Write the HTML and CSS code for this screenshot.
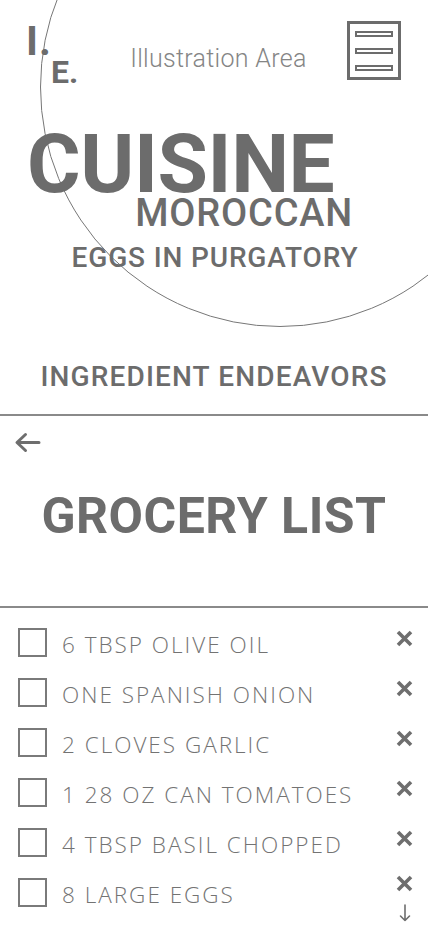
FILE: index.html
```html
<!DOCTYPE html>
<html lang="en">
<head>
<meta charset="utf-8">
<title>Cuisine – Grocery List</title>
<link rel="stylesheet" href="styles.css">
</head>
<body>
<div class="page">
  <header class="hero">
    <div class="circle"></div>
    <div class="topbar">
      <div class="logo"><span class="logo-i">I.</span><span class="logo-e">E.</span></div>
      <div class="illus">Illustration Area</div>
      <div class="menu"><span class="bar"></span><span class="bar"></span><span class="bar"></span></div>
    </div>
    <div class="titles">
      <h1 class="cuisine">CUISINE</h1>
      <div class="moroccan">MOROCCAN</div>
      <div class="dish">EGGS IN PURGATORY</div>
    </div>
  </header>

  <div class="brand">INGREDIENT ENDEAVORS</div>
  <hr class="rule">

  <div class="back">
    <svg width="27" height="21" viewBox="0 0 27 21"><path d="M25 10.5 H3.5 M11.5 2.5 L3 10.5 L11.5 18.5" fill="none" stroke="#6e6e6e" stroke-width="3" stroke-linecap="round" stroke-linejoin="round"/></svg>
  </div>

  <h2 class="grocery">GROCERY LIST</h2>
  <hr class="rule rule-list">

  <ul class="list">
    <li class="item"><span class="box"></span><span class="label">6 TBSP OLIVE OIL</span><span class="actions"><svg class="x" width="17" height="17" viewBox="0 0 17 17"><path d="M2 2 L15 15 M15 2 L2 15" stroke="#6e6e6e" stroke-width="3.6"/></svg></span></li>
    <li class="item"><span class="box"></span><span class="label">ONE SPANISH ONION</span><span class="actions"><svg class="x" width="17" height="17" viewBox="0 0 17 17"><path d="M2 2 L15 15 M15 2 L2 15" stroke="#6e6e6e" stroke-width="3.6"/></svg></span></li>
    <li class="item"><span class="box"></span><span class="label">2 CLOVES GARLIC</span><span class="actions"><svg class="x" width="17" height="17" viewBox="0 0 17 17"><path d="M2 2 L15 15 M15 2 L2 15" stroke="#6e6e6e" stroke-width="3.6"/></svg></span></li>
    <li class="item"><span class="box"></span><span class="label">1 28 OZ CAN TOMATOES</span><span class="actions"><svg class="x" width="17" height="17" viewBox="0 0 17 17"><path d="M2 2 L15 15 M15 2 L2 15" stroke="#6e6e6e" stroke-width="3.6"/></svg></span></li>
    <li class="item"><span class="box"></span><span class="label">4 TBSP BASIL CHOPPED</span><span class="actions"><svg class="x" width="17" height="17" viewBox="0 0 17 17"><path d="M2 2 L15 15 M15 2 L2 15" stroke="#6e6e6e" stroke-width="3.6"/></svg></span></li>
    <li class="item item-last"><span class="box"></span><span class="label">8 LARGE EGGS</span><span class="actions"><svg class="x" width="17" height="17" viewBox="0 0 17 17"><path d="M2 2 L15 15 M15 2 L2 15" stroke="#6e6e6e" stroke-width="3.6"/></svg><svg class="down" width="12" height="18" viewBox="0 0 12 18"><path d="M6 1 V16.5 M1.5 12 L6 16.5 L10.5 12" fill="none" stroke="#6e6e6e" stroke-width="1.6" stroke-linecap="round" stroke-linejoin="round"/></svg></span></li>
  </ul>
</div>
</body>
</html>
```
FILE: styles.css
```css
* { box-sizing: border-box; }
html, body { margin: 0; padding: 0; background: #ffffff; }
body {
  font-family: Roboto, "Noto Sans", "DejaVu Sans", sans-serif;
  color: #6c6c6c;
  overflow-x: hidden;
}
.page { width: 428px; }

.hero {
  position: relative;
  height: 340px;
  overflow: hidden;
  padding-top: 21px;
}
.circle {
  position: absolute;
  left: 40px;
  top: -153px;
  width: 480px;
  height: 480px;
  border: 1px solid #777777;
  border-radius: 50%;
  pointer-events: none;
}
.topbar {
  position: relative;
  display: flex;
  align-items: flex-start;
  padding: 0 27px 0 26px;
  height: 59px;
}
.logo {
  display: flex;
  align-items: flex-start;
  font-weight: 700;
  color: #6c6c6c;
}
.logo-i {
  font-size: 41px;
  line-height: 41px;
  letter-spacing: 1px;
}
.logo-e {
  font-size: 32px;
  line-height: 32px;
  margin-top: 35px;
  margin-left: -1px;
}
.illus {
  margin-left: 52px;
  margin-top: 25px;
  font-size: 25px;
  line-height: 25px;
  font-weight: 300;
  color: #858585;
  letter-spacing: 0.3px;
}
.menu {
  margin-left: auto;
  width: 54px;
  height: 59px;
  border: 3px solid #6c6c6c;
  display: flex;
  flex-direction: column;
  gap: 11px;
  padding: 7px 5px 0 5px;
}
.bar {
  display: block;
  width: 38px;
  height: 6px;
  border: 2px solid #6c6c6c;
}

.titles { position: relative; margin-top: 50px; }
.cuisine {
  margin: 0;
  padding-left: 27px;
  font-size: 82px;
  line-height: 68px;
  font-weight: 700;
  letter-spacing: -0.4px;
}
.moroccan {
  text-align: right;
  padding-right: 75px;
  font-size: 38px;
  line-height: 30px;
  font-weight: 500;
  letter-spacing: 0.8px;
}
.dish {
  text-align: center;
  margin-top: 16px;
  font-size: 28px;
  line-height: 28px;
  font-weight: 500;
  letter-spacing: 0.85px;
  padding-left: 2px;
}

.brand {
  margin-top: 23px;
  text-align: center;
  font-size: 28px;
  line-height: 28px;
  font-weight: 500;
  letter-spacing: 1.15px;
}
.rule {
  margin: 23px 0 0 0;
  border: 0;
  height: 2px;
  background: #8a8a8a;
}
.back {
  margin-top: 16px;
  padding-left: 14px;
  height: 21px;
}
.back svg { display: block; }
.grocery {
  margin: 38px 0 0 0;
  text-align: center;
  font-size: 50px;
  line-height: 50px;
  font-weight: 700;
  letter-spacing: 0.5px;
}
.rule-list { margin-top: 65px; }

.list {
  list-style: none;
  margin: 0;
  padding: 20px 15px 0 18px;
}
.item {
  display: flex;
  align-items: flex-start;
  height: 50px;
}
.item-last { height: auto; }
.box {
  flex: none;
  width: 29px;
  height: 29px;
  border: 2px solid #7a7a7a;
}
.label {
  margin-left: 15px;
  margin-top: 2px;
  font-family: "Open Sans", Roboto, sans-serif;
  font-size: 22.5px;
  line-height: 29px;
  font-weight: 300;
  letter-spacing: 2px;
  color: #737373;
}
.actions {
  margin-left: auto;
  display: flex;
  flex-direction: column;
  align-items: center;
}
.x { display: block; margin-top: 2px; }
.item-last .x { margin-top: -3px; }
.down { display: block; margin-top: 12px; }
```
